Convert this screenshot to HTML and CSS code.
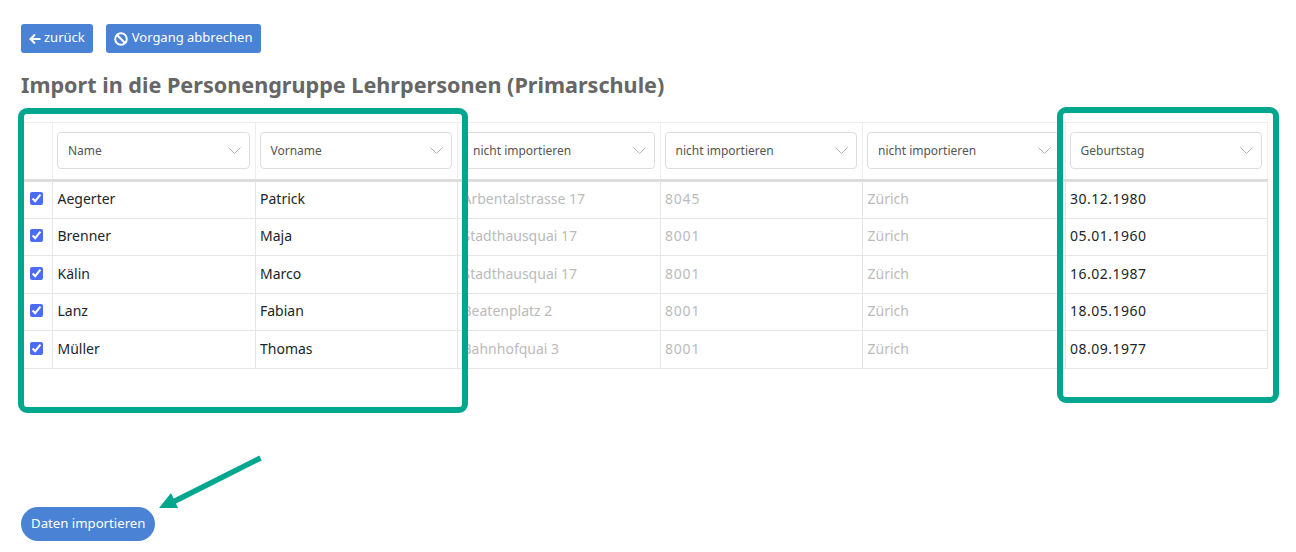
FILE: index.html
```html
<!DOCTYPE html>
<html lang="de">
<head>
<meta charset="utf-8">
<title>Import</title>
<link rel="stylesheet" href="styles.css">
</head>
<body>
<main class="page">
  <div class="actions">
    <a class="btn"><svg class="ico" viewBox="0 0 12 12"><path d="M11.500 6H2M6 1.500 1.500 6 6 10.500" fill="none" stroke="currentColor" stroke-width="2"/></svg>zurück</a>
    <a class="btn"><svg class="ico ico-ban" viewBox="0 0 14 14"><circle cx="7" cy="7" r="5.800" fill="none" stroke="currentColor" stroke-width="2"/><path d="M3 3l8 8" stroke="currentColor" stroke-width="2"/></svg>Vorgang abbrechen</a>
  </div>
  <h1 class="title">Import in die Personengruppe Lehrpersonen (Primarschule)</h1>
  <table class="grid">
    <colgroup><col class="col-check"><col><col><col><col><col><col></colgroup>
    <thead>
      <tr>
        <th></th>
        <th><div class="select"><span>Name</span><svg class="chev" viewBox="0 0 13 7"><path d="M.5.500 6.500 6.500 12.500.500"/></svg></div></th>
        <th><div class="select"><span>Vorname</span><svg class="chev" viewBox="0 0 13 7"><path d="M.5.500 6.500 6.500 12.500.500"/></svg></div></th>
        <th><div class="select"><span>nicht importieren</span><svg class="chev" viewBox="0 0 13 7"><path d="M.5.500 6.500 6.500 12.500.500"/></svg></div></th>
        <th><div class="select"><span>nicht importieren</span><svg class="chev" viewBox="0 0 13 7"><path d="M.5.500 6.500 6.500 12.500.500"/></svg></div></th>
        <th><div class="select"><span>nicht importieren</span><svg class="chev" viewBox="0 0 13 7"><path d="M.5.500 6.500 6.500 12.500.500"/></svg></div></th>
        <th><div class="select"><span>Geburtstag</span><svg class="chev" viewBox="0 0 13 7"><path d="M.5.500 6.500 6.500 12.500.500"/></svg></div></th>
      </tr>
    </thead>
    <tbody>
      <tr><td class="check"><input type="checkbox" checked></td><td>Aegerter</td><td>Patrick</td><td class="off">Arbentalstrasse 17</td><td class="off plz">8045</td><td class="off">Zürich</td><td class="date">30.12.1980</td></tr>
      <tr><td class="check"><input type="checkbox" checked></td><td>Brenner</td><td>Maja</td><td class="off">Stadthausquai 17</td><td class="off plz">8001</td><td class="off">Zürich</td><td class="date">05.01.1960</td></tr>
      <tr><td class="check"><input type="checkbox" checked></td><td>Kälin</td><td>Marco</td><td class="off">Stadthausquai 17</td><td class="off plz">8001</td><td class="off">Zürich</td><td class="date">16.02.1987</td></tr>
      <tr><td class="check"><input type="checkbox" checked></td><td>Lanz</td><td>Fabian</td><td class="off">Beatenplatz 2</td><td class="off plz">8001</td><td class="off">Zürich</td><td class="date">18.05.1960</td></tr>
      <tr><td class="check"><input type="checkbox" checked></td><td>Müller</td><td>Thomas</td><td class="off">Bahnhofquai 3</td><td class="off plz">8001</td><td class="off">Zürich</td><td class="date">08.09.1977</td></tr>
    </tbody>
  </table>
  <a class="btn btn-pill">Daten importieren</a>
</main>
<div class="mark mark-left"></div>
<div class="mark mark-right"></div>
<svg class="arrow" viewBox="0 0 110 65"><path d="M101.500 2 14 46" fill="none" stroke="#00a78e" stroke-width="5.500"/><path d="M0 52 12 37 19 52Z" fill="#00a78e"/></svg>
</body>
</html>
```
FILE: styles.css
```css
* { box-sizing: border-box; }
html, body { margin: 0; height: 100%; background: #fff; }
body { position: relative; overflow: hidden; font-family: "Noto Sans", "Liberation Sans", sans-serif; color: #212529; }
.page { padding: 24px 28px 0 21px; }
.actions { display: flex; gap: 13px; }
.btn { display: inline-flex; align-items: center; height: 29px; padding: 0 8px 3px; background: #4a82d6; color: #fff; border-radius: 3px; font-size: 13px; white-space: nowrap; }
.ico { width: 12px; height: 12px; margin: 3px 3px 0 0; }
.ico-ban { width: 14px; height: 14px; margin-right: 4px; }
.actions .btn:last-child { padding-right: 9px; }
.title { margin: 19px 0 24px; font-size: 21.600px; line-height: 26px; font-weight: 700; color: #666; white-space: nowrap; }
.grid { width: 1247px; table-layout: fixed; border-collapse: collapse; font-size: 14px; }
.col-check { width: 31px; }
.grid th { height: 58px; padding: 0 5px 2px 4px; border: 1px solid #eee; border-bottom: 3px solid #ddd; font-weight: 400; }
.grid td { height: 37.500px; padding: 0 5px 2px 4.500px; border: 1px solid #e6e6e6; white-space: nowrap; overflow: hidden; }
.grid td.check { padding: 0 1px 2px 0; text-align: center; }
.grid input { display: block; width: 13px; height: 13px; margin: 0 auto; accent-color: #4a6cf7; }
.off { color: #bbb; }
.plz { letter-spacing: .8px; }
.date { letter-spacing: .5px; }
.select { display: flex; align-items: center; justify-content: space-between; height: 37px; padding: 0 8px 0 10px; border: 1px solid #ddd; border-radius: 4px; background: #fff; font-size: 12px; color: #555; text-align: left; }
.chev { width: 13px; height: 7px; fill: none; stroke: #b5b5b5; stroke-width: 1; }
.btn-pill { height: 34px; margin-top: 138px; padding: 0 10px 1px; border-radius: 17px; font-size: 13.200px; }
.mark { position: absolute; border: 6px solid #00a78e; border-radius: 9px; }
.mark-left { left: 18px; top: 108px; width: 450px; height: 305px; }
.mark-right { left: 1057px; top: 107px; width: 222px; height: 296px; }
.arrow { position: absolute; left: 159px; top: 456px; width: 110px; height: 65px; overflow: visible; }
```
